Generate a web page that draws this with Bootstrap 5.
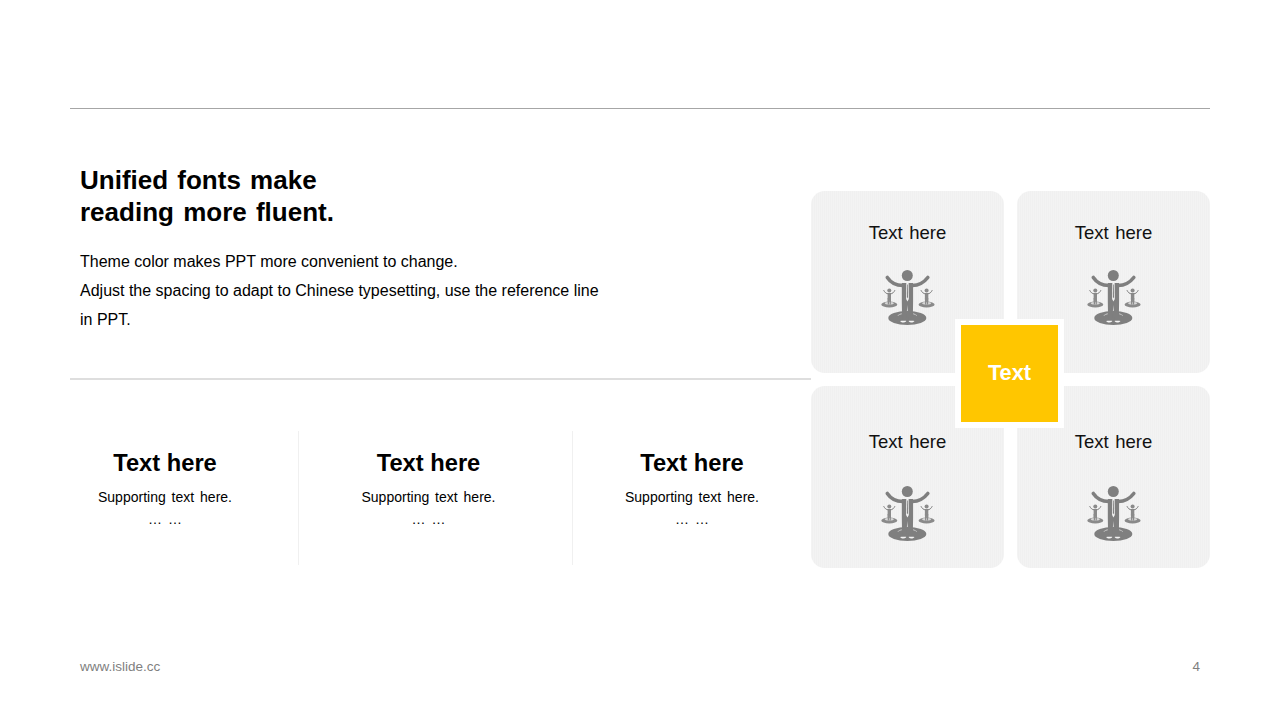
<!DOCTYPE html>
<html lang="en">
<head>
<meta charset="utf-8">
<title>Slide</title>
<link href="https://cdn.jsdelivr.net/npm/bootstrap@5.3.0/dist/css/bootstrap.min.css" rel="stylesheet">
<style>
html,body{margin:0;background:#fff}
body{width:1280px;height:720px;overflow:hidden;font-family:"Liberation Sans",Arial,sans-serif;color:#000}
.slide-sheet{width:1280px;height:720px;padding:108px 70px 0 70px}
.top-rule{height:1px;background:#a6a6a6}
.body-zone{height:506px}
.left-pane{width:741px}
.intro{height:271px;padding:55px 0 0 10px;border-bottom:2px solid #dedede}
.intro h1{font-size:26px;line-height:32px;font-weight:700;margin:0 0 19px;word-spacing:2px;color:#000}
.intro p{font-size:16px;line-height:29px;margin:0;width:530px}
.trio{padding-top:51px}
.trio-cell{height:134px;padding:16px 38px 0 0;text-align:center;width:228px}
.trio-cell + .trio-cell{border-left:1px solid #f0f0f0;width:274px;padding-right:14px}
.trio-cell:nth-child(3){width:239px;padding-right:0}
.trio-cell h2{font-size:23.7px;line-height:32px;font-weight:700;margin:0 0 7px;color:#000}
.trio-cell p{font-size:14px;line-height:22px;margin:0;word-spacing:2px}
.tile-grid{width:399px;margin-top:82px;position:relative;display:grid;grid-template-columns:193px 193px;grid-template-rows:182px 182px;column-gap:13px;row-gap:13px}
.tile{border-radius:14px;text-align:center;background-color:#f0f0f0;background-image:repeating-linear-gradient(90deg,rgba(255,255,255,.22) 0 1px,transparent 1px 2px);font-size:18.5px;line-height:24px;padding-top:30px;word-spacing:1.5px;color:#111}
.tile svg{display:block;margin:21px auto 0}
.tile.lower{padding-top:44px}
.tile.lower svg{margin-top:28px}
.hub{position:absolute;left:144px;top:128px;width:109px;height:109px;background:#ffc600;border:6px solid #fff;display:flex;align-items:center;justify-content:center;color:#fff;font-weight:700;font-size:21.8px}
.foot-row{padding:0 10px;font-size:13.5px;line-height:16px;color:#7f7f7f;margin-top:44px}
</style>
</head>
<body>
<svg width="0" height="0" class="position-absolute">
  <defs>
    <symbol id="man" viewBox="0.7 0 60 62">
      <g fill="#7f7f7f">
        <ellipse cx="30" cy="52" rx="19" ry="7"/>
        <circle cx="30" cy="9.500" r="5.500"/>
        <path d="M24.500 17 H35.800 V36 L35.500 55 H31 L30 39 L29 55 H24.800 L24.500 36 Z"/>
      </g>
      <g fill="#8a8a8a">
        <ellipse cx="12" cy="38.500" rx="8" ry="3"/>
        <ellipse cx="49.300" cy="38.500" rx="8" ry="3"/>
        <circle cx="12" cy="24.500" r="2"/>
        <circle cx="49.300" cy="24.500" r="2"/>
        <path d="M10.300 27 H13.700 V32 L13.500 38.500 H12.400 L12 33 L11.600 38.500 H10.500 L10.300 32 Z"/>
        <path d="M47.600 27 H51 V32 L50.800 38.500 H49.700 L49.300 33 L48.900 38.500 H47.800 L47.600 32 Z"/>
      </g>
      <ellipse cx="12" cy="37.300" rx="4.500" ry="1.200" fill="#d8d8d8"/>
      <ellipse cx="49.300" cy="37.300" rx="4.500" ry="1.200" fill="#d8d8d8"/>
      <path d="M10.300 32 H13.700 L13.500 38.500 H12.400 L12 33 L11.600 38.500 H10.500 Z M47.600 32 H51 L50.800 38.500 H49.700 L49.300 33 L48.900 38.500 H47.800 Z" fill="#8a8a8a"/>
      <g fill="none" stroke="#7f7f7f" stroke-linecap="round">
        <path d="M10 11.500 C13 16 18 19.500 25.500 19.500 M50.500 11.500 C47 16 42 19.500 35 19.500" stroke-width="3.600"/>
        <path d="M6.500 24.500 C7.500 26.500 9 27.800 10.500 27.800 M17.500 24.500 C16.500 26.500 15 27.800 13.500 27.800 M43.800 24.500 C44.800 26.500 46.300 27.800 47.800 27.800 M54.800 24.500 C53.800 26.500 52.300 27.800 50.800 27.800" stroke-width="1"/>
      </g>
      <path d="M29 17 H31.300 L31.500 33 L30.200 35.500 L28.800 33 Z" fill="#f4f4f4"/>
      <path d="M29.800 18.500 H30.500 L30.700 31 L30.200 32.500 L29.600 31 Z" fill="#7f7f7f"/>
      <path d="M22.800 55 C24.500 57 27 56.800 28.800 55.600 V54.800 H24.500 Z M31.500 55.600 C33 56.800 35.500 57 37.200 55 L35.800 54.800 H31.500 Z" fill="#f4f4f4"/>
      <path d="M19.500 50 C21 48.500 23 47.600 24.500 47.300 V48.200 C23 48.700 21.500 49.300 19.500 50 Z M40.500 50 C39 48.500 37 47.600 35.800 47.300 V48.200 C37 48.700 38.500 49.300 40.500 50 Z" fill="#c4c4c4"/>
    </symbol>
  </defs>
</svg>
<div class="slide-sheet">
  <div class="top-rule"></div>
  <div class="body-zone d-flex">
    <div class="left-pane">
      <div class="intro">
        <h1>Unified fonts make<br>reading more fluent.</h1>
        <p>Theme color makes PPT more convenient to change.<br>Adjust the spacing to adapt to Chinese typesetting, use the reference line in PPT.</p>
      </div>
      <div class="trio d-flex">
        <div class="trio-cell"><h2>Text here</h2><p>Supporting text here.<br>… …</p></div>
        <div class="trio-cell"><h2>Text here</h2><p>Supporting text here.<br>… …</p></div>
        <div class="trio-cell"><h2>Text here</h2><p>Supporting text here.<br>… …</p></div>
      </div>
    </div>
    <div class="tile-grid">
      <div class="tile">Text here<svg width="60" height="62"><use href="#man"/></svg></div>
      <div class="tile">Text here<svg width="60" height="62"><use href="#man"/></svg></div>
      <div class="tile lower">Text here<svg width="60" height="62"><use href="#man"/></svg></div>
      <div class="tile lower">Text here<svg width="60" height="62"><use href="#man"/></svg></div>
      <div class="hub">Text</div>
    </div>
  </div>
  <div class="foot-row d-flex justify-content-between"><span>www.islide.cc</span><span>4</span></div>
</div>
</body>
</html>
